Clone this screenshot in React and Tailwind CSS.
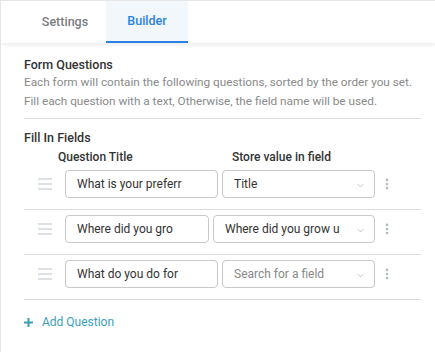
import { ChevronDown, MoreVertical } from 'lucide-react';

const rows = [
  { title: 'What is your preferr', field: 'Title', inputW: 'w-[153px]', selectW: 'w-[153px]' },
  { title: 'Where did you gro', field: 'Where did you grow u', inputW: 'w-[144px]', selectW: 'w-[162px]' },
  { title: 'What do you do for', field: '', inputW: 'w-[153px]', selectW: 'w-[153px]' },
];

const DragHandle = () => (
  <div className="w-[14px] flex flex-col gap-[3px]">
    <span className="block h-[2px] bg-[#dde1e6]" />
    <span className="block h-[2px] bg-[#dde1e6]" />
    <span className="block h-[2px] bg-[#dde1e6]" />
  </div>
);

const QuestionRow = ({ row }) => (
  <div className="flex items-center pt-[5px] pb-[11px] border-b border-[#dcdcdc]">
    <div className="w-[41px] flex justify-end pr-[13px]">
      <DragHandle />
    </div>
    <div className="flex items-center gap-[4px]">
      <div className={`${row.inputW} h-[28px] border border-[#c8c8c8] rounded-[4px] flex items-center pl-[11px] text-[12px] text-[#333] whitespace-nowrap`}>
        {row.title}
      </div>
      <div className={`${row.selectW} h-[28px] border border-[#c8c8c8] rounded-[4px] flex items-center justify-between pl-[11px] pr-[8px] text-[12px] whitespace-nowrap`}>
        {row.field ? (
          <span className="text-[#333]">{row.field}</span>
        ) : (
          <span className="text-[#888]">Search for a field</span>
        )}
        <ChevronDown size={11} strokeWidth={1.5} className="flex-none text-[#aaa] mt-[2px]" />
      </div>
    </div>
    <MoreVertical size={14} strokeWidth={2.5} className="text-[#b4bac2] ml-[5px]" />
  </div>
);

export default function App() {
  return (
    <div className="w-[435px] h-[352px] bg-white border-t border-l border-[#e6e6e6] overflow-hidden" style={{ fontFamily: 'Roboto, "Noto Sans", sans-serif' }}>
      {/* Tabs */}
      <div className="h-[42px] flex shadow-[0_2px_4px_rgba(0,0,0,0.08)]">
        <div className="w-[82px] ml-[23px] flex items-center justify-center text-[12.5px] font-medium text-[#7a7d82]">
          Settings
        </div>
        <div className="w-[82px] flex items-center justify-center bg-[#f2f7fc] border-b-2 border-[#2a82e4] text-[12.5px] font-medium text-[#2a82e4]">
          Builder
        </div>
      </div>

      <div className="pl-[23px] pr-[14px]">
        <div className="pt-[14px] text-[12.5px] leading-[16px] font-medium text-[#333]">Form Questions</div>
        <p className="text-[11.75px] leading-[19px] text-[#8a8a8a] pb-[7px] border-b border-[#dcdcdc] whitespace-nowrap">
          Each form will contain the following questions, sorted by the order you set.
          <br />
          Fill each question with a text, Otherwise, the field name will be used.
        </p>

        <div className="pt-[11px] text-[12.5px] leading-[16px] font-medium text-[#333]">Fill In Fields</div>
        <div className="flex mt-[3px] text-[12px] leading-[16px] font-medium text-[#333]">
          <span className="ml-[34px] w-[174px]">Question Title</span>
          <span>Store value in field</span>
        </div>
        <div>
          {rows.map((row) => (
            <QuestionRow key={row.title} row={row} />
          ))}
        </div>

        <div className="flex items-center gap-[9px] mt-[14px] text-[12px] leading-[16px] text-[#3a9fb8]">
          <svg width="9" height="9" viewBox="0 0 9 9">
            <path d="M4.5 0v9M0 4.5h9" stroke="currentColor" strokeWidth="2" />
          </svg>
          Add Question
        </div>
      </div>
    </div>
  );
}
